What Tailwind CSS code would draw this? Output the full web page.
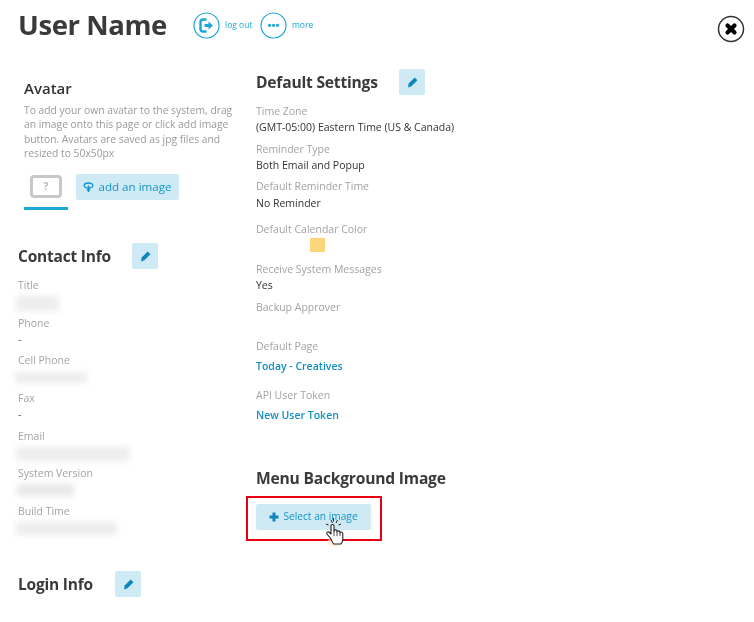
<!DOCTYPE html>
<html><head><meta charset="utf-8"><script src="https://cdn.jsdelivr.net/npm/@tailwindcss/browser@4"></script></head>
<body class="bg-white">
<div class="w-[754px] h-[622px] overflow-hidden relative font-['Open_Sans',sans-serif] text-[#333] blur-[0.5px]">
  <header class="flex items-center h-[50px] pl-[18px] pr-[9px]">
    <h1 class="text-[27.500px] leading-[50px] font-bold w-[175px] text-[#3a3a3a] tracking-[-0.4px]">User Name</h1>
    <a class="flex items-center gap-[5px] w-[67px] text-[8.500px] text-[#1ba8d8]">
      <svg class="w-[27px] h-[27px] shrink-0" viewBox="0 0 27 27" fill="none"><circle cx="13.500" cy="13.500" r="12.500" stroke="#1ba8d8" stroke-width="1.200"/><path d="M13.500 7.500H10a2.500 2.500 0 0 0-2.500 2.500v7a2.500 2.500 0 0 0 2.500 2.500h3.500" stroke="#1ba8d8" stroke-width="2.400"/><path d="M11.500 12h4V9.500l4.500 4-4.500 4V15h-4z" fill="#1ba8d8"/></svg>
      <span>log out</span>
    </a>
    <a class="flex items-center gap-[5px] text-[8.500px] text-[#1ba8d8]">
      <svg class="w-[27px] h-[27px]" viewBox="0 0 27 27" fill="none"><circle cx="13.500" cy="13.500" r="12.500" stroke="#1ba8d8" stroke-width="1.200"/><circle cx="9.500" cy="13.300" r="1.600" fill="#1ba8d8"/><circle cx="13.500" cy="13.300" r="1.600" fill="#1ba8d8"/><circle cx="17.500" cy="13.300" r="1.600" fill="#1ba8d8"/></svg>
      <span>more</span>
    </a>
    <svg class="ml-auto mt-[7px] w-[28px] h-[28px]" viewBox="0 0 28 28" fill="none"><circle cx="14" cy="14" r="12.500" stroke="#333" stroke-width="1.500"/><path d="M10.500 10.500l7 7M17.500 10.500l-7 7" stroke="#000" stroke-width="4.200" stroke-linecap="round"/></svg>
  </header>

  <main class="flex">
    <div class="w-[238px] shrink-0 pl-[18px]">
      <section class="pl-[6px] pt-[27px] w-[222px]">
        <h2 class="text-[15px] leading-[22px] font-semibold">Avatar</h2>
        <p class="mt-[4px] text-[10.300px] leading-[14.300px] text-[#9a9a9a]">To add your own avatar to the system, drag an image onto this page or click add image button. Avatars are saved as jpg files and resized to 50x50px</p>
        <div class="flex mt-[15px] gap-[8px]">
          <div class="w-[44px] h-[32px] border-b-[3px] border-[#1ba8d8] flex justify-center items-start box-content">
            <div class="w-[32px] h-[23px] border-[3px] border-[#c8c8c8] rounded-[4px] flex items-center justify-center text-[10px] font-bold text-[#b5b5b5]">?</div>
          </div>
          <div class="w-[103px] h-[26px] -mt-[1px] bg-[#cfeaf5] rounded-[2px] flex items-center justify-center gap-[4px] text-[11.600px] font-medium text-[#1495c9]">
            <svg class="w-[11px] h-[11px]" viewBox="0 0 11 11" fill="none"><path d="M5.500 1C3 1 1.200 2 1.200 3.500S3 6 5.500 6s4.300-1 4.300-2.500S8 1 5.500 1z" stroke="#1495c9" stroke-width="1.300"/><path d="M5.500 3.500V10M3.800 8h3.400" stroke="#1495c9" stroke-width="1.300"/></svg>
            <span>add an image</span>
          </div>
        </div>
      </section>

      <section class="mt-[33px]">
        <div class="flex items-center h-[26px]">
          <h2 class="text-[15.500px] font-bold w-[114px] tracking-[-0.2px] text-[#3a3a3a]">Contact Info</h2>
          <button class="w-[26px] h-[26px] bg-[#cfeaf5] rounded-[2px] flex items-center justify-center"><svg class="w-[11px] h-[11px]" viewBox="0 0 10 10"><path d="M7 .5 9.500 3 4 8.500 1 9.500 1.500 6z" fill="#0c86bd"/></svg></button>
        </div>
        <div class="mt-[9px] text-[10.500px] leading-[15px]">
          <div class="h-[37.600px] text-[#a3a3a3]">Title<div class="mt-[3px] -ml-[2px] w-[43px] h-[15px] bg-[#ededed] blur-[3px]"></div></div>
          <div class="h-[37.600px] text-[#a3a3a3]">Phone<div class="text-[#555] mt-[1px]">-</div></div>
          <div class="h-[37.600px] text-[#a3a3a3]">Cell Phone<div class="mt-[4px] -ml-[3px] w-[72px] h-[11px] bg-[#ededed] blur-[3px]"></div></div>
          <div class="h-[37.600px] text-[#a3a3a3]">Fax<div class="text-[#555] mt-[1px]">-</div></div>
          <div class="h-[37.600px] text-[#a3a3a3]">Email<div class="mt-[3px] -ml-[2px] w-[113px] h-[14px] bg-[#ededed] blur-[3px]"></div></div>
          <div class="h-[37.600px] text-[#a3a3a3]">System Version<div class="mt-[3px] -ml-[1px] w-[57px] h-[12px] bg-[#e8e8e8] blur-[3px]"></div></div>
          <div class="h-[37.600px] text-[#a3a3a3]">Build Time<div class="mt-[3px] -ml-[2px] w-[101px] h-[13px] bg-[#ededed] blur-[3px]"></div></div>
        </div>
      </section>

      <section class="mt-[30px] flex items-center h-[26px]">
        <h2 class="text-[15.500px] font-bold w-[97px] tracking-[-0.2px] text-[#3a3a3a]">Login Info</h2>
        <button class="w-[26px] h-[26px] bg-[#cfeaf5] rounded-[2px] flex items-center justify-center"><svg class="w-[11px] h-[11px]" viewBox="0 0 10 10"><path d="M7 .5 9.500 3 4 8.500 1 9.500 1.500 6z" fill="#0c86bd"/></svg></button>
      </section>
    </div>

    <div class="pl-[18px] flex-1 pt-[19px]">
      <div class="flex items-center h-[26px]">
        <h2 class="text-[15.600px] font-bold w-[143px] tracking-[-0.2px] text-[#3a3a3a] pt-[1px]">Default Settings</h2>
        <button class="w-[26px] h-[26px] bg-[#cfeaf5] rounded-[2px] flex items-center justify-center"><svg class="w-[11px] h-[11px]" viewBox="0 0 10 10"><path d="M7 .5 9.500 3 4 8.500 1 9.500 1.500 6z" fill="#0c86bd"/></svg></button>
      </div>
      <dl class="mt-[9px] text-[10.500px] leading-[15px]">
        <dt class="text-[#a3a3a3]">Time Zone</dt><dd class="mt-[1px] text-[#333]">(GMT-05:00) Eastern Time (US &amp; Canada)</dd>
        <dt class="mt-[7px] text-[#a3a3a3]">Reminder Type</dt><dd class="mt-[1px] text-[#333]">Both Email and Popup</dd>
        <dt class="mt-[6px] text-[#a3a3a3]">Default Reminder Time</dt><dd class="mt-[2px] text-[#333]">No Reminder</dd>
        <dt class="mt-[11px] text-[#a3a3a3]">Default Calendar Color</dt><dd class="mt-[1px] ml-[54px] w-[15px] h-[14px] bg-[#fcd67a]"></dd>
        <dt class="mt-[10px] text-[#a3a3a3]">Receive System Messages</dt><dd class="mt-[1px] text-[#333]">Yes</dd>
        <dt class="mt-[7px] text-[#a3a3a3]">Backup Approver</dt><dd class="h-[16px]"></dd>
        <dt class="mt-[8px] text-[#a3a3a3]">Default Page</dt><dd class="mt-[5px] font-semibold text-[#0f8fc4]">Today - Creatives</dd>
        <dt class="mt-[14px] text-[#a3a3a3]">API User Token</dt><dd class="mt-[5px] font-semibold text-[#0f8fc4]">New User Token</dd>
      </dl>
      <h2 class="mt-[43px] text-[15.600px] leading-[24px] font-bold tracking-[-0.2px] text-[#3a3a3a]">Menu Background Image</h2>
      <div class="relative mt-[6px] -ml-[10px] w-[136px] h-[45px] border-[2.500px] border-[#e60012] flex items-center pl-[8px] pb-[4px]">
        <div class="w-[115px] h-[26px] bg-[#cfeaf5] rounded-[2px] flex items-center justify-center gap-[4px] text-[10.200px] text-[#1495c9] font-medium">
          <svg class="w-[10px] h-[10px]" viewBox="0 0 10 10"><path d="M3.500.5h3v3h3v3h-3v3h-3v-3h-3v-3h3z" fill="#0c86bd"/></svg>
          <span>Select an image</span>
        </div>
        <svg class="absolute left-[75px] top-[19px] w-[24px] h-[30px]" viewBox="0 0 24 30" fill="none">
          <ellipse cx="12" cy="25" rx="8" ry="4" fill="#fde3c0" opacity=".7"/>
          <path d="M8 22 4 17c-1-1.500 1-3 2.500-1.500L8 17V9c0-2 3-2 3 0v5c0-1.500 3-1.500 3 0v1c0-1.500 3-1.500 3 0v1c0-1.500 2.800-1.200 2.800.5V22c0 2-1 4-2 5H11c-1 0-2-3-3-5z" fill="#fff" stroke="#222" stroke-width="1.100" stroke-linejoin="round"/>
          <path d="M9.500 6 8 3M5.500 8 3 7M13 6l1.500-3M15.500 8l2.500-1M10.500 4.500V1" stroke="#222" stroke-width="1"/>
          <path d="M11 14v5M14 15v4M17 16v3" stroke="#222" stroke-width=".8"/>
        </svg>
      </div>
    </div>
  </main>
</div>
</body></html>
